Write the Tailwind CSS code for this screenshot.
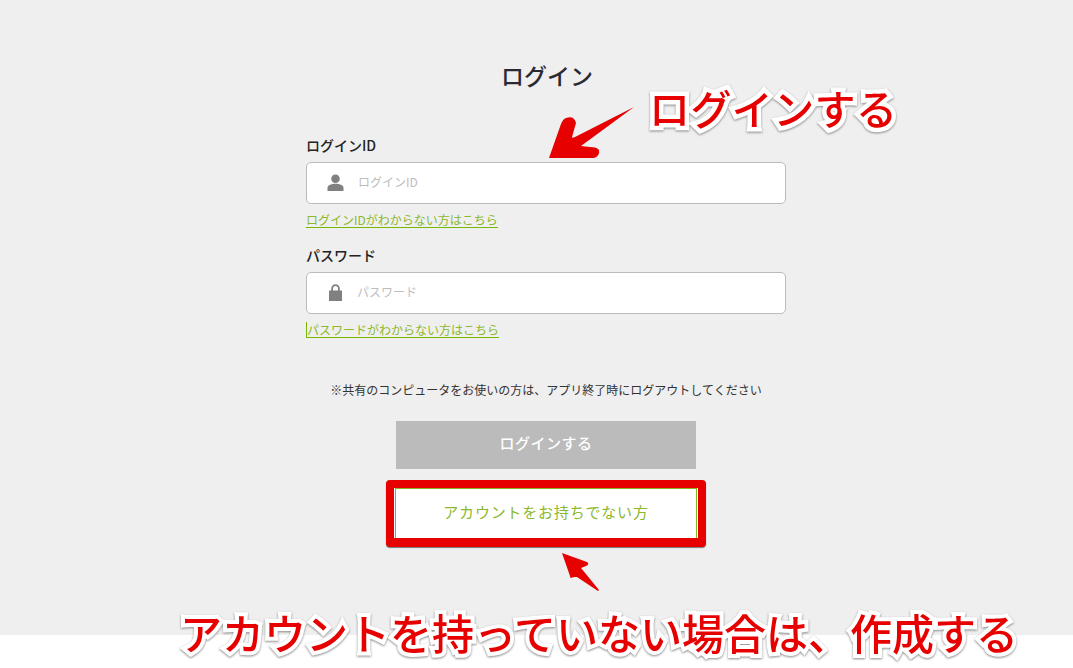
<!DOCTYPE html>
<html lang="ja">
  <head>
    <meta charset="UTF-8" />
    <meta name="viewport" content="width=device-width, initial-scale=1.0" />
    <title>ログイン</title>
    <script src="https://cdn.jsdelivr.net/npm/@tailwindcss/browser@4"></script>
  </head>
  <body class="bg-white text-[#222] font-['Noto_Sans_CJK_JP','Noto_Sans',sans-serif] overflow-hidden">
    <div class="relative h-[668px] w-[1073px] overflow-hidden">
      <!-- Login form -->
      <main class="h-[635px] bg-[#efefef] pt-[59px] pl-[306px]">
        <div class="w-[480px]">
          <h1 class="h-[32px] text-center text-[23px] leading-[32px] font-medium text-[#2a2a33] pl-[2px]">ログイン</h1>

          <label class="block mt-[44px] h-[20px] text-[14px] leading-[20px] font-medium">ログインID</label>
          <div class="mt-[7px] h-[42px] bg-white border border-[#bbb] rounded-[5px] flex items-center">
            <svg class="ml-[20px] w-[17px] h-[17px] -mt-[1px]" viewBox="0 0 17 17" fill="#808080">
              <circle cx="8.5" cy="4.8" r="4.3" />
              <path d="M0.5 17v-3.2c0-2.4 3.6-4 8-4s8 1.600 8 4V17z" />
            </svg>
            <span class="ml-[14px] pb-[2px] text-[12px] text-[#bdbdbd]">ログインID</span>
          </div>
          <a href="#" class="block w-fit mt-[8px] h-[16px] text-[12px] leading-[15px] text-[#8cb82b] border-b border-[#76b900]">ログインIDがわからない方はこちら</a>

          <label class="block mt-[17px] h-[20px] text-[14px] leading-[20px] font-medium">パスワード</label>
          <div class="mt-[7px] h-[42px] bg-white border border-[#bbb] rounded-[5px] flex items-center">
            <svg class="ml-[21px] w-[15px] h-[17px] -mt-[1px]" viewBox="0 0 15 17" fill="#808080">
              <path d="M1 6.500h2.200V4.500a4.300 4.300 0 0 1 8.600 0v2h2.200V17H1zM5 6.500h5V4.500a2.500 2.500 0 0 0-5 0z" fill-rule="evenodd" />
            </svg>
            <span class="ml-[14px] pb-[2px] text-[12px] text-[#bdbdbd]">パスワード</span>
          </div>
          <a href="#" class="block w-fit mt-[8px] h-[16px] text-[12px] leading-[15px] text-[#8cb82b] border-b border-l border-[#76b900]">パスワードがわからない方はこちら</a>

          <p class="mt-[44px] h-[16px] text-center text-[12px] leading-[16px] text-[#333]">※共有のコンピュータをお使いの方は、アプリ終了時にログアウトしてください</p>

          <div class="mt-[23px] flex flex-col items-center">
            <button class="w-[300px] h-[48px] pb-[3px] bg-[#babbba] text-white text-[15px] font-medium tracking-[0.5px]">ログインする</button>
            <div class="mt-[11px] box-border w-[320px] h-[67px] border-[8px] border-b-[9px] border-[#e60000] rounded-[4px] shadow-[0_1px_1px_#777] bg-white">
              <button class="block ml-px w-[302px] h-[50px] pb-[2px] border border-[#85b81e] border-b-0 text-[15px] text-[#8cb82b] tracking-[0.8px]">アカウントをお持ちでない方</button>
            </div>
          </div>
        </div>
      </main>

      <!-- Annotations over the page -->
      <svg class="absolute left-0 top-0 pointer-events-none" width="1073" height="668" viewBox="0 0 1073 668">
        <path d="M634 107 L577 136 Q572 139 572 137 L576 123 Q574 115 566 118 Q563 119 561 124 L549 158 L594 158 Q600 156 599 150 Q597 147 590 147 L581 146 Z" fill="#e60000" />
        <path d="M562 553 L587 562 Q590 564 586 566 L581 568 L599 590 L598 591 L577 577 L574 577 L571 578 Q570 578 570 576 Z" fill="#e60000" />
      </svg>
      <div class="absolute left-[649px] top-[77px] whitespace-nowrap text-[41px] tracking-[0.4px] leading-[60px] font-medium text-[#e60000] [-webkit-text-stroke:9px_white] [paint-order:stroke_fill] drop-shadow-[0_1px_1px_#888]">ログインする</div>
      <div class="absolute left-[180px] top-[601px] whitespace-nowrap text-[42px] leading-[62px] font-medium text-[#e60000] [-webkit-text-stroke:8px_white] [paint-order:stroke_fill] drop-shadow-[0_1px_1px_#888]">アカウントを持っていない場合は、作成する</div>
    </div>
  </body>
</html>
